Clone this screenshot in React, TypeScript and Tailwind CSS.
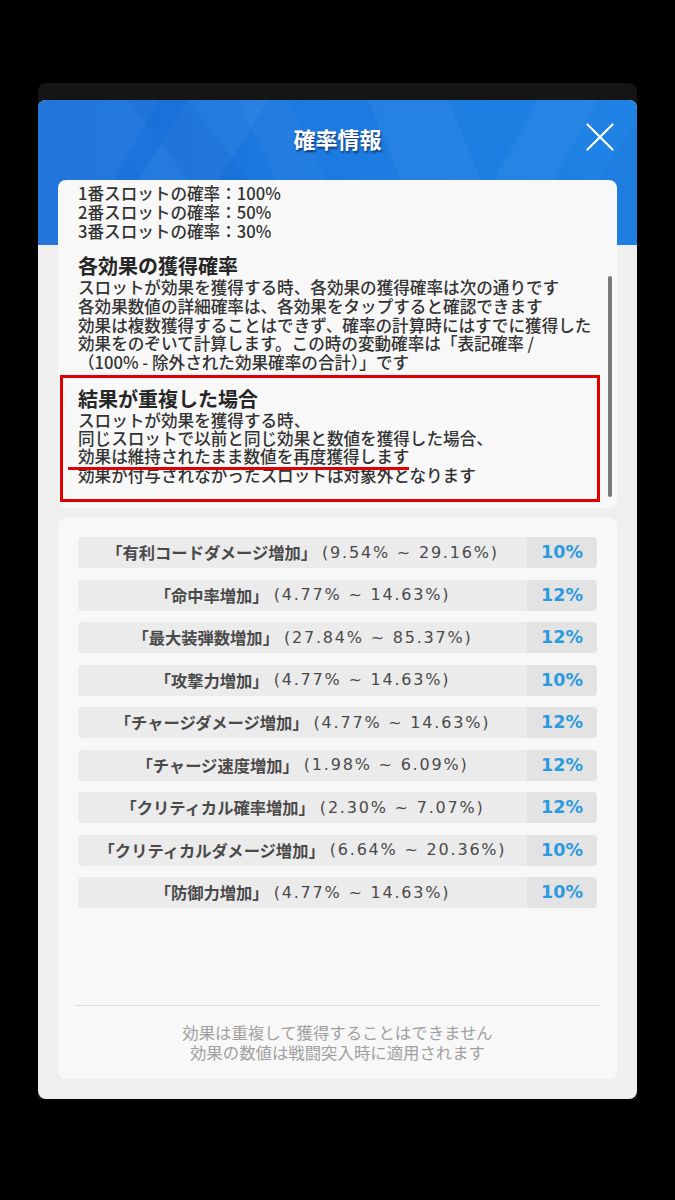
const rows: [string, string, string][] = [
  ['「有利コードダメージ増加」', '(9.54% ~ 29.16%)', '10%'],
  ['「命中率増加」', '(4.77% ~ 14.63%)', '12%'],
  ['「最大装弾数増加」', '(27.84% ~ 85.37%)', '12%'],
  ['「攻撃力増加」', '(4.77% ~ 14.63%)', '10%'],
  ['「チャージダメージ増加」', '(4.77% ~ 14.63%)', '12%'],
  ['「チャージ速度増加」', '(1.98% ~ 6.09%)', '12%'],
  ['「クリティカル確率増加」', '(2.30% ~ 7.07%)', '12%'],
  ['「クリティカルダメージ増加」', '(6.64% ~ 20.36%)', '10%'],
  ['「防御力増加」', '(4.77% ~ 14.63%)', '10%'],
];

function HeaderPattern() {
  return (
    <svg className="absolute inset-x-0 top-0 h-[145px] w-full" viewBox="0 0 599 145" preserveAspectRatio="none">
      <defs>
        <linearGradient id="hb" x1="0" y1="0" x2="1" y2="0">
          <stop offset="0" stopColor="#1a70da" />
          <stop offset="0.5" stopColor="#1c7be0" />
          <stop offset="1" stopColor="#1f82e4" />
        </linearGradient>
      </defs>
      <rect width="599" height="145" fill="url(#hb)" />
      <polygon points="0,0 120,0 40,145 0,145" fill="#ffffff" opacity="0.04" />
      <polygon points="60,145 150,0 230,0 140,145" fill="#ffffff" opacity="0.045" />
      <polygon points="150,0 260,145 200,145 90,0" fill="#0a4fb8" opacity="0.1" />
      <polygon points="330,0 410,0 470,145 390,145" fill="#ffffff" opacity="0.045" />
      <polygon points="420,145 500,0 560,0 480,145" fill="#ffffff" opacity="0.04" />
      <polygon points="250,0 320,145 270,145 200,0" fill="#ffffff" opacity="0.03" />
      <polygon points="520,145 599,20 599,145" fill="#0a4fb8" opacity="0.07" />
    </svg>
  );
}

function CloseIcon() {
  return (
    <svg width="28" height="28" viewBox="0 0 28 28">
      <path d="M1.5 1.5 L26.5 26.5 M26.5 1.5 L1.5 26.5" stroke="#ffffff" strokeWidth="2.2" strokeLinecap="round" />
    </svg>
  );
}

function InfoCard() {
  return (
    <div className="relative z-10 mx-[20px] flex h-[328px] overflow-hidden rounded-lg bg-[#f8f8f8] text-[16.6px] font-medium text-[#333333]">
      <div className="ml-[2px] w-[540px] shrink-0 whitespace-nowrap pt-[4px]">
        <div className="pl-[18px] leading-[18.8px]">
          <div>1番スロットの確率：100%</div>
          <div>2番スロットの確率：50%</div>
          <div>3番スロットの確率：30%</div>
        </div>
        <div className="mt-[13.6px] pl-[18px] text-[20px] font-bold leading-[24px] text-[#262626]">各効果の獲得確率</div>
        <div className="pl-[18px] leading-[18.8px]">
          <div>スロットが効果を獲得する時、各効果の獲得確率は次の通りです</div>
          <div>各効果数値の詳細確率は、各効果をタップすると確認できます</div>
          <div>効果は複数獲得することはできず、確率の計算時にはすでに獲得した</div>
          <div>効果をのぞいて計算します。この時の変動確率は「表記確率 /</div>
          <div>（100% - 除外された効果確率の合計）」です</div>
        </div>
        <div className="mt-[3px] border-[3px] border-[#e10000] pb-[15px] pl-[15px] pt-[9px]">
          <div className="text-[20px] font-bold leading-[24px] text-[#262626]">結果が重複した場合</div>
          <div className="leading-[18px]">
            <div>スロットが効果を獲得する時、</div>
            <div>同じスロットで以前と同じ効果と数値を獲得した場合、</div>
            <div className="relative">
              効果は維持されたまま数値を再度獲得します
              <div className="absolute bottom-[-5px] left-[-10px] h-[2.5px] w-[341px] bg-[#e10000]" />
            </div>
            <div className="mt-[1px]">効果が付与されなかったスロットは対象外となります</div>
          </div>
        </div>
      </div>
      <div className="ml-[8px] mt-[96px] h-[221px] w-[4px] shrink-0 rounded-full bg-[#7a7a7a]" />
    </div>
  );
}

function RatesCard() {
  return (
    <div className="relative z-10 mx-[20px] mt-[10px] flex flex-col rounded-lg bg-[#f8f8f8] px-[20px] pb-[17px] pt-[19px]">
      <div className="flex flex-col gap-[11.5px]">
        {rows.map(([name, range, rate]) => (
          <div key={name} className="flex h-[31px] overflow-hidden rounded-[4px]">
            <div className="flex flex-1 items-center justify-center whitespace-nowrap bg-[#ebebeb] text-[16.3px] text-[#4a4a4a]">
              <span className="font-bold">{name}</span>
              <span className="ml-[5px] font-['DejaVu_Sans',sans-serif] text-[16px] tracking-[1.8px]">{range}</span>
            </div>
            <div className="flex w-[70px] items-center justify-center bg-[#e3e3e3] font-['DejaVu_Sans',sans-serif] text-[17.5px] font-bold text-[#2b9ae0]">
              {rate}
            </div>
          </div>
        ))}
      </div>
      <div className="-mx-[3px] mt-[96.5px] h-px bg-[#dcdcdc]" />
      <div className="mt-[16px] text-center text-[16.4px] leading-[20px] text-[#a0a0a0]">
        <div>効果は重複して獲得することはできません</div>
        <div>効果の数値は戦闘突入時に適用されます</div>
      </div>
    </div>
  );
}

export default function App() {
  return (
    <div className="min-h-[1200px] w-[675px] overflow-hidden bg-black pt-[83px] font-['Noto_Sans_CJK_JP','Noto_Sans',sans-serif]">
      <div className="mx-[38px] rounded-t-lg bg-[#151515] pt-[17px]">
        <div className="relative overflow-hidden rounded-lg bg-[#efefef] pb-[20px]">
          <HeaderPattern />
          <div className="relative z-10 grid h-[80px] grid-cols-[74px_1fr_74px] items-start">
            <div />
            <div className="pt-[24px] text-center text-[22px] font-bold leading-[28px] text-white [text-shadow:1px_2px_2px_rgba(0,20,70,0.65)]">
              確率情報
            </div>
            <div className="flex justify-center pt-[23px]">
              <CloseIcon />
            </div>
          </div>
          <InfoCard />
          <RatesCard />
        </div>
      </div>
    </div>
  );
}
